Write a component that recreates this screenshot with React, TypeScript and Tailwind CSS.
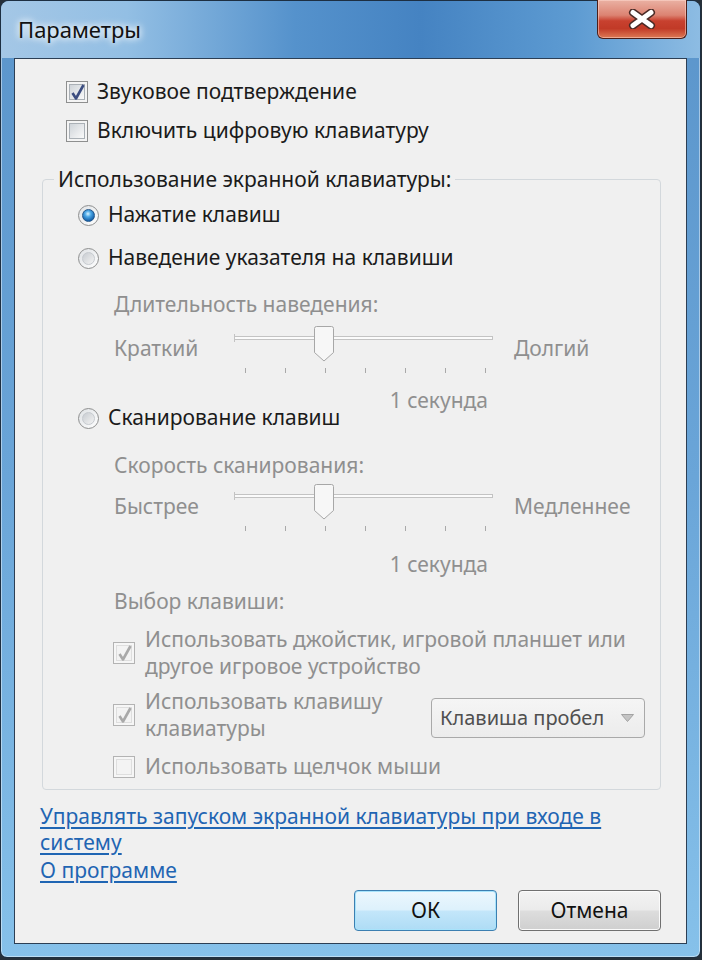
import React from "react";

const txt = "text-[#1b1b1b]";
const dim = "text-[#8f8f8f]";

function Check({ checked, disabled }: { checked?: boolean; disabled?: boolean }) {
  return (
    <span
      className={`relative flex h-[22px] w-[22px] shrink-0 items-center justify-center border ${
        disabled ? "border-[#b3b3b3] bg-[#f6f6f6]" : "border-[#8e8f8f] bg-[#f4f4f4]"
      }`}
    >
      <span
        className={`h-[16px] w-[16px] border ${
          disabled
            ? "border-[#dedede] bg-[#f3f3f3]"
            : "border-[#aab0b6] bg-[linear-gradient(135deg,#cfd4d9,#fafafa)]"
        }`}
      />
      {checked && (
        <svg className="absolute left-[3px] top-[1px]" width="16" height="18" viewBox="0 0 16 18">
          <path
            d="M2.5 10 L6 15.5 L13.5 2"
            fill="none"
            stroke={disabled ? "#a9a9a9" : "#3c4d80"}
            strokeWidth="2.6"
            strokeLinejoin="round"
          />
        </svg>
      )}
    </span>
  );
}

function Radio({ checked }: { checked?: boolean }) {
  return (
    <span className="flex h-[21px] w-[21px] shrink-0 items-center justify-center rounded-full border border-[#8e8f8f] bg-[linear-gradient(135deg,#dfe2e5,#ffffff)]">
      <span
        className={`h-[13px] w-[13px] rounded-full border ${
          checked
            ? "border-[#24578a] bg-[radial-gradient(circle_at_45%_35%,#d8f3ff_0%,#4aa7e6_32%,#145ea8_75%,#0c3d74_100%)]"
            : "border-[#c6cacf] bg-[linear-gradient(135deg,#c8ccd1,#f4f4f4)]"
        }`}
      />
    </span>
  );
}

function Slider() {
  const ticks = [13, 53, 93, 133, 173, 213, 253];
  return (
    <svg width="262" height="50" viewBox="0 0 262 50" className="shrink-0">
      <rect x="2.5" y="12.5" width="258" height="3" fill="#fbfbfb" stroke="#c3c3c3" />
      <line x1="2.5" y1="10" x2="2.5" y2="18" stroke="#c3c3c3" />
      {ticks.map((x) => (
        <line key={x} x1={x + 0.5} y1="44" x2={x + 0.5} y2="49" stroke="#a9a9a9" />
      ))}
      <path
        d="M84.5 2.5 H99.5 A2 2 0 0 1 101.5 4.5 V28.5 L92 37 L82.5 28.5 V4.5 A2 2 0 0 1 84.5 2.5 Z"
        fill="#f7f7f7"
        stroke="#a7a7a7"
      />
    </svg>
  );
}

function SliderRow({ left, right }: { left: string; right: string }) {
  return (
    <div className={`flex h-[50px] items-start ${dim}`}>
      <span className="mt-[12px] w-[118px] leading-[24px]">{left}</span>
      <Slider />
      <span className="ml-[20px] mt-[12px] leading-[24px]">{right}</span>
    </div>
  );
}

function CloseButton() {
  return (
    <div className="-mt-px flex h-[39px] w-[90px] items-center justify-center rounded-b-[6px] border border-t-0 border-[#4b1f1a] bg-[linear-gradient(180deg,#eab1a3_0%,#dc8372_40%,#c8412f_55%,#c13a27_75%,#dd7a55_100%)] shadow-[inset_0_0_0_1px_rgba(255,220,210,0.5)]">
      <svg width="28" height="20" viewBox="0 0 28 20">
        <path d="M5 3.5 L23 16.5 M23 3.5 L5 16.5" stroke="#4a2a26" strokeWidth="8" strokeLinecap="round" />
        <path d="M5 3.5 L23 16.5 M23 3.5 L5 16.5" stroke="#ffffff" strokeWidth="5" strokeLinecap="round" />
      </svg>
    </div>
  );
}

export default function App() {
  return (
    <div className="h-[960px] w-[702px] bg-[#26303a] font-['Noto_Sans','DejaVu_Sans',sans-serif] text-[21px]">
      <div className="flex h-[958px] w-[701px] flex-col rounded-t-[9px] rounded-b-[7px] border border-[#1d2f42] bg-[linear-gradient(180deg,#5b95cb,#6aa5d8_50%,#86c1ea)] px-[13px] pb-[13px] shadow-[inset_0_0_0_1px_rgba(255,255,255,0.45)]">
        {/* заголовок */}
        <div className="-mx-[13px] flex h-[57px] shrink-0 items-start justify-between rounded-t-[8px] bg-[linear-gradient(90deg,#a4c7e6_0%,#93bfe4_18%,#5592cc_42%,#4583c2_60%,#5d9bd2_82%,#8dbce3_100%)] px-[13px]">
          <div className="self-center pl-[4px] text-[22px] text-[#111] [text-shadow:0_0_10px_#fff,0_0_6px_#fff]">
            Параметры
          </div>
          <CloseButton />
        </div>

        {/* клиентская область */}
        <div className="flex flex-1 flex-col border border-[#2c3f55] bg-[#f0f0f0] px-[25px] pt-[21px]">
          <div className={`flex h-[24px] items-center gap-[9px] pl-[26px] ${txt}`}>
            <Check checked />
            <span>Звуковое подтверждение</span>
          </div>
          <div className={`mt-[15px] flex h-[24px] items-center gap-[9px] pl-[26px] ${txt}`}>
            <Check />
            <span>Включить цифровую клавиатуру</span>
          </div>

          <fieldset className="ml-[2px] mt-[22px] rounded-[4px] border border-[#d3d8dc] pb-[10px]">
            <legend className={`ml-[11px] px-[4px] leading-[28px] ${txt}`}>
              Использование экранной клавиатуры:
            </legend>
            <div className="flex flex-col pl-[35px]">
              <div className={`mt-[10px] flex h-[24px] items-center gap-[9px] ${txt}`}>
                <Radio checked />
                <span>Нажатие клавиш</span>
              </div>
              <div className={`mt-[19px] flex h-[24px] items-center gap-[9px] ${txt}`}>
                <Radio />
                <span>Наведение указателя на клавиши</span>
              </div>

              <div className="ml-[36px] flex flex-col">
                <div className={`mt-[22px] leading-[24px] ${dim}`}>Длительность наведения:</div>
                <div className="mt-[8px]">
                  <SliderRow left="Краткий" right="Долгий" />
                </div>
                <div className={`mt-[14px] w-[374px] text-right leading-[24px] ${dim}`}>1 секунда</div>
              </div>

              <div className={`-mt-[6px] flex h-[24px] items-center gap-[9px] ${txt}`}>
                <Radio />
                <span>Сканирование клавиш</span>
              </div>

              <div className="ml-[36px] flex flex-col">
                <div className={`mt-[23px] leading-[24px] ${dim}`}>Скорость сканирования:</div>
                <div className="mt-[5px]">
                  <SliderRow left="Быстрее" right="Медленнее" />
                </div>
                <div className={`mt-[20px] w-[374px] text-right leading-[24px] ${dim}`}>1 секунда</div>
                <div className={`mt-[13px] leading-[24px] ${dim}`}>Выбор клавиши:</div>

                <div className={`-ml-px mt-[13px] flex items-center gap-[10px] ${dim}`}>
                  <Check checked disabled />
                  <span className="leading-[27px]">
                    Использовать джойстик, игровой планшет или
                    <br />
                    другое игровое устройство
                  </span>
                </div>
                <div className={`-ml-px mt-[8px] flex items-center ${dim}`}>
                  <Check checked disabled />
                  <span className="ml-[10px] w-[286px] leading-[27px]">
                    Использовать клавишу
                    <br />
                    клавиатуры
                  </span>
                  <div className="mt-[6px] flex h-[40px] w-[214px] items-center justify-between rounded-[4px] border border-[#a9a9a9] bg-[linear-gradient(180deg,#f5f5f5,#ececec)] pl-[8px] pr-[10px] text-[20px] text-[#4f4f4f]">
                    <span>Клавиша пробел</span>
                    <svg width="13" height="8" viewBox="0 0 13 8">
                      <path d="M0.5 0.5 H12.5 L6.5 7.5 Z" fill="#c4c4c4" stroke="#a3a3a3" />
                    </svg>
                  </div>
                </div>
                <div className={`-ml-px mt-[13px] flex h-[24px] items-center gap-[10px] ${dim}`}>
                  <Check disabled />
                  <span>Использовать щелчок мыши</span>
                </div>
              </div>
            </div>
          </fieldset>

          <a href="#" className="mt-[13px] leading-[26px] text-[#1f65b3] underline underline-offset-[3px]">
            Управлять запуском экранной клавиатуры при входе в
            <br />
            систему
          </a>
          <a href="#" className="mt-[2px] self-start leading-[26px] text-[#1f65b3] underline underline-offset-[3px]">
            О программе
          </a>

          <div className="mt-[7px] flex justify-end gap-[21px]">
            <button className="flex h-[41px] w-[143px] items-center justify-center rounded-[4px] border border-[#3c7fb1] bg-[linear-gradient(180deg,#ecf7fd_0%,#ddf1fc_48%,#c3e6fa_52%,#aedcf5_100%)] text-[#111] shadow-[inset_0_0_0_1px_#a8e3fb]">
              ОК
            </button>
            <button className="flex h-[41px] w-[143px] items-center justify-center rounded-[4px] border border-[#707070] bg-[linear-gradient(180deg,#f3f3f3_0%,#ebebeb_48%,#dddddd_52%,#cfcfcf_100%)] text-[#111] shadow-[inset_0_0_0_1px_#fbfbfb]">
              Отмена
            </button>
          </div>
        </div>
      </div>
    </div>
  );
}
